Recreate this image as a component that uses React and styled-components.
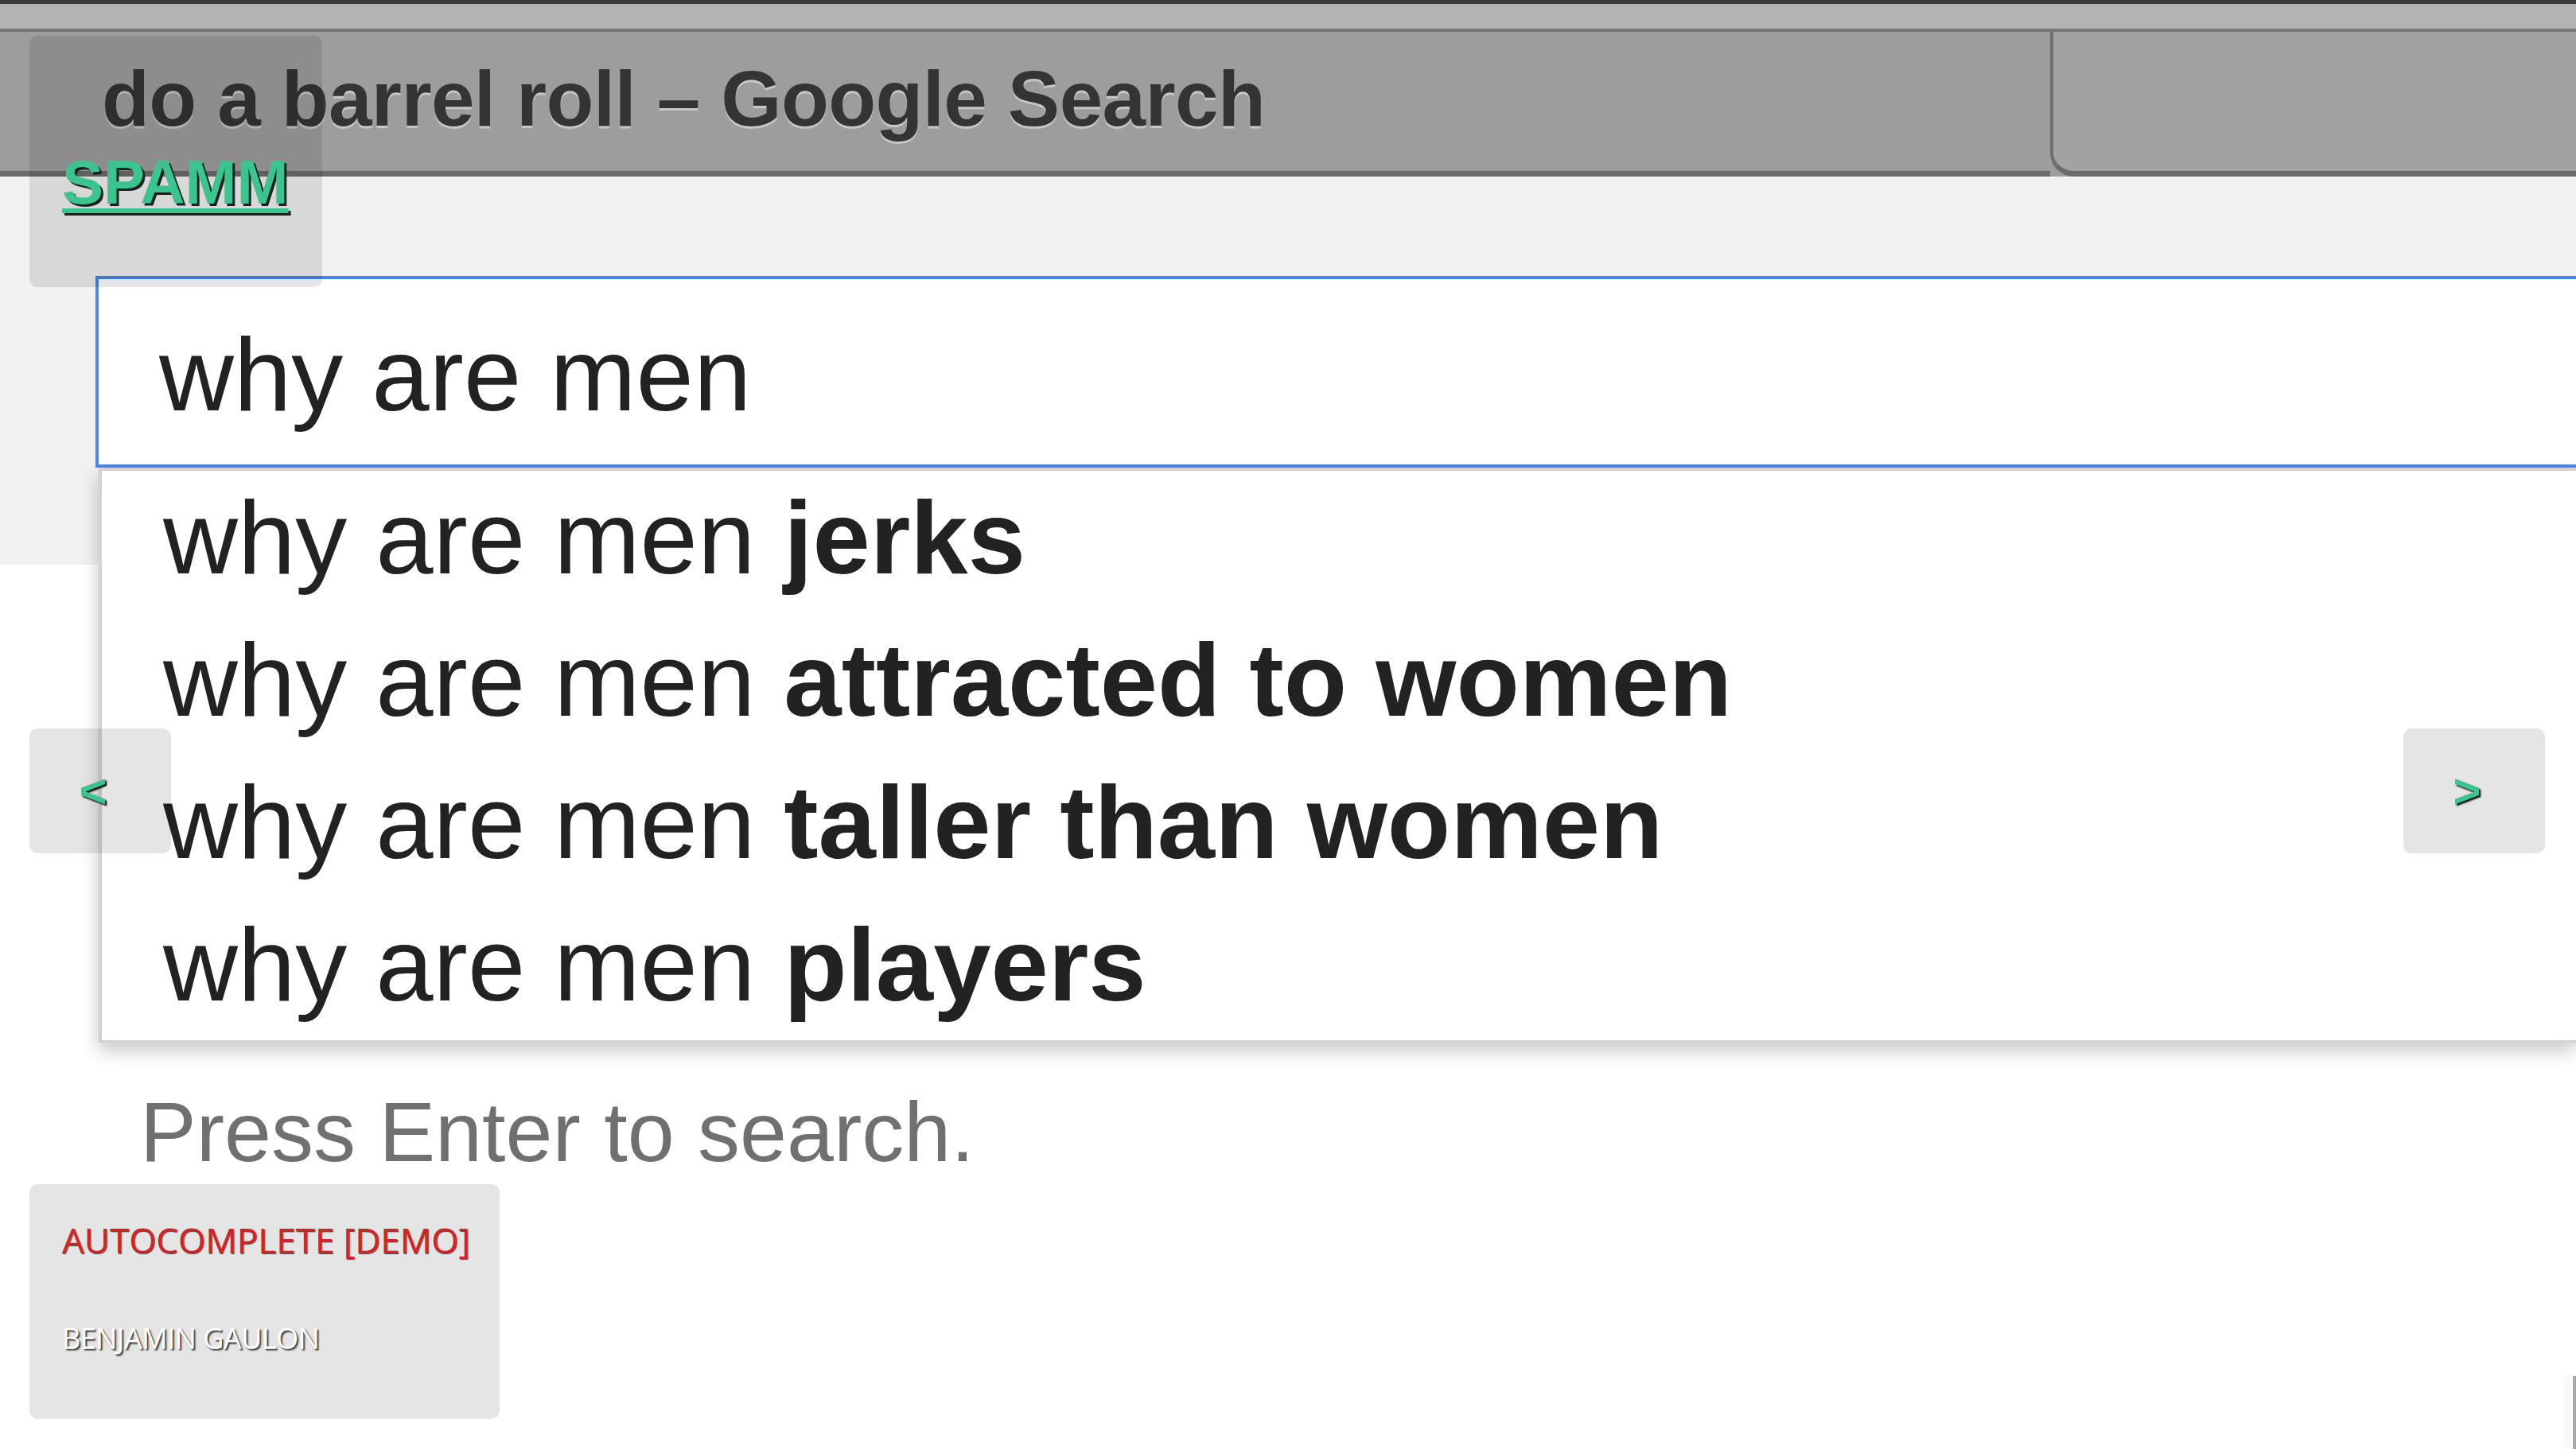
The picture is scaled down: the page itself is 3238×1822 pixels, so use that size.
import React from 'react'
import styled, { createGlobalStyle } from 'styled-components'

const GlobalStyle = createGlobalStyle`
html, body, #root {
    margin: 0;
    padding: 0;
    height: 100%;
}
body {
    background: #ffffff;
    font-family: "Liberation Sans", Arial, sans-serif;
}
`

const Stage = styled.div`
position: relative;
width: 100vw;
height: 100vh;
overflow: hidden;
background: #ffffff;
`

const Screen = styled.div`
display: flex;
flex-direction: column;
`

const TopEdge = styled.div`
height: 5px;
background: #3b3b3b;
`

const Band = styled.div`
height: 31px;
background: #b3b3b3;
`

const TabStrip = styled.div`
display: flex;
height: 186px;
background: #9d9d9d;
border-top: 4px solid #777777;
box-sizing: border-box;
`

const ActiveTab = styled.div`
width: 2577px;
display: flex;
align-items: center;
padding: 0 0 8px 128px;
box-sizing: border-box;
border-bottom: 7px solid #6b6b6b;
`

const NextTab = styled.div`
flex: 1;
background: #a2a2a2;
border-left: 4px solid #6f6f6f;
border-bottom: 7px solid #6b6b6b;
border-bottom-left-radius: 30px;
`

const TabTitle = styled.span`
font-family: "Liberation Sans", Arial, sans-serif;
font-weight: 700;
font-size: 98px;
line-height: 1;
letter-spacing: -0.6px;
color: #343434;
text-shadow: 0 3px 1px rgba(255, 255, 255, 0.45);
white-space: nowrap;
`

const Body = styled.div`
padding: 125px 0 0 120px;
background: linear-gradient(to bottom, #f1f1f1 0, #f1f1f1 488px, #ffffff 488px);
min-height: 1600px;
box-sizing: border-box;
`

const SearchBox = styled.div`
border: 4px solid #4a86e8;
border-right: none;
padding: 55px 0 48px 76px;
background: #ffffff;
font-size: 130px;
line-height: 130px;
color: #222222;
white-space: nowrap;
`

const Suggestions = styled.ul`
list-style: none;
margin: 0 0 0 4px;
padding: 0 0 0 77px;
background: #ffffff;
border: 4px solid #d2d2d2;
border-bottom-width: 3px;
border-right: none;
box-shadow: 0 10px 22px rgba(0, 0, 0, 0.22);
`

const Suggestion = styled.li`
height: 179px;
box-sizing: border-box;
padding-bottom: 10px;
font-size: 130px;
line-height: 169px;
color: #222222;
white-space: nowrap;

b {
    font-weight: 700;
}
`

const Hint = styled.p`
margin: 59px 0 0 56px;
font-size: 106px;
line-height: 106px;
color: #707070;
`

const Panel = styled.div`
position: absolute;
background: rgba(0, 0, 0, 0.1);
border-radius: 10px;
box-sizing: border-box;
`

const LogoPanel = styled(Panel)`
left: 37px;
top: 45px;
width: 368px;
height: 316px;
padding: 145px 0 0 41px;
`

const Logo = styled.a`
font-family: "Liberation Sans", Arial, sans-serif;
font-weight: 700;
font-size: 78px;
line-height: 78px;
color: #3cc48e;
text-decoration: underline;
text-decoration-thickness: 6px;
text-underline-offset: 6px;
text-shadow: 3px 3px 0 #1f1f1f;
`

const NavButton = styled(Panel)`
top: 916px;
width: 178px;
height: 157px;
display: flex;
align-items: center;
justify-content: center;
padding-right: 18px;
${p => (p.side === 'left' ? 'left: 37px;' : 'right: 39px;')}
font-family: "Liberation Sans", Arial, sans-serif;
font-weight: 700;
font-size: 60px;
color: #3cc48e;
text-shadow: 2px 2px 2px #000000;
cursor: pointer;
`

const Caption = styled(Panel)`
left: 37px;
top: 1489px;
width: 591px;
height: 295px;
padding: 48px 0 0 41px;
font-family: "Open Sans", "Liberation Sans", sans-serif;
`

const CaptionTitle = styled.div`
font-size: 44px;
line-height: 44px;
color: #d92027;
text-shadow: 1px 1px 1px rgba(0, 0, 0, 0.7);
white-space: nowrap;
`

const CaptionAuthor = styled.div`
margin-top: 84px;
font-size: 36px;
line-height: 36px;
letter-spacing: -0.5px;
color: #ffffff;
text-shadow: 2px 2px 2px #333333;
white-space: nowrap;
`

const EdgeShadow = styled.div`
position: absolute;
right: 0;
bottom: 0;
width: 4px;
height: 92px;
background: #a8a8a8;
box-shadow: -8px 0 8px rgba(0, 0, 0, 0.08);
`

const suggestions = ['jerks', 'attracted to women', 'taller than women', 'players']

const App = () => {
    return (
        <Stage>
            <GlobalStyle />
            <Screen>
                <TopEdge />
                <Band />
                <TabStrip>
                    <ActiveTab>
                        <TabTitle>do a barrel roll – Google Search</TabTitle>
                    </ActiveTab>
                    <NextTab />
                </TabStrip>
                <Body>
                    <SearchBox>why are men</SearchBox>
                    <Suggestions>
                        {suggestions.map(s => (
                            <Suggestion key={s}>why are men <b>{s}</b></Suggestion>
                        ))}
                    </Suggestions>
                    <Hint>Press Enter to search.</Hint>
                </Body>
            </Screen>
            <LogoPanel>
                <Logo href="#">SPAMM</Logo>
            </LogoPanel>
            <NavButton side="left">&lt;</NavButton>
            <NavButton side="right">&gt;</NavButton>
            <Caption>
                <CaptionTitle>AUTOCOMPLETE [DEMO]</CaptionTitle>
                <CaptionAuthor>BENJAMIN GAULON</CaptionAuthor>
            </Caption>
            <EdgeShadow />
        </Stage>
    )
}

export default App
